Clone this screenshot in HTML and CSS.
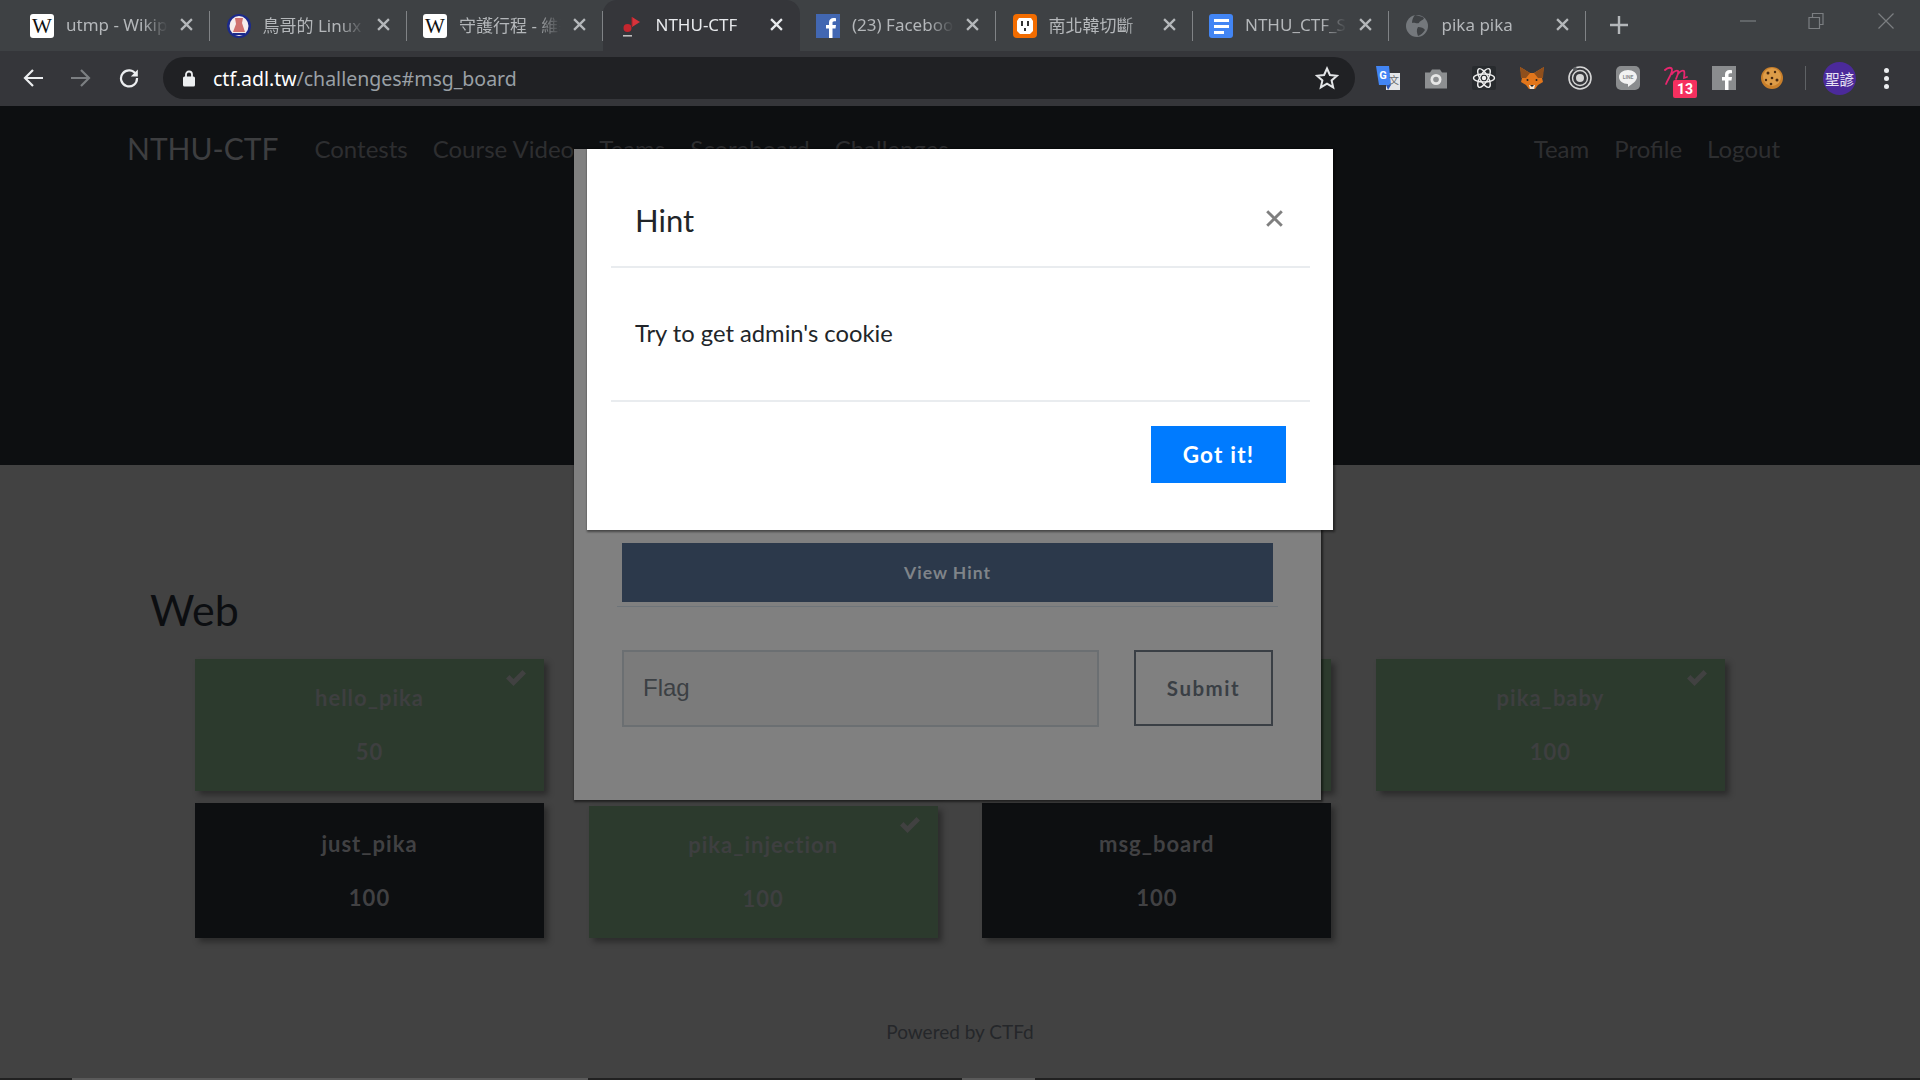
FILE: index.html
```html
<!DOCTYPE html>
<html lang="zh-Hant">
<head>
    <meta charset="UTF-8">
    <link rel="stylesheet" href="styles.css">
    <title>NTHU-CTF</title>
</head>
<body>

    <svg class="sprite" width="0" height="0">
        <symbol id="x" viewBox="0 0 12 12"><path d="M1 1l10 10M11 1L1 11" fill="none" stroke="currentColor" stroke-width="2.1"/></symbol>
        <symbol id="wiki" viewBox="0 0 24 24"><rect width="24" height="24" rx="3" fill="#fff"/><text x="12" y="19" text-anchor="middle" class="wiki-w">W</text></symbol>
        <symbol id="check" viewBox="0 0 22 18"><path d="M1 9.500l3.500-3.500 4 4L17.500 1 21 4.500 8.500 17z" fill="currentColor"/></symbol>
    </svg>

    <!-- tabs -->
    <div class="tabstrip">
        <div class="tab">
            <svg class="favicon"><use href="#wiki"/></svg>
            <span class="tab-title">utmp - Wikipedia</span>
            <svg class="tab-x"><use href="#x"/></svg>
        </div>
        <div class="tab">
            <svg class="favicon" viewBox="0 0 24 24"><ellipse cx="12" cy="12" rx="12" ry="12" fill="#1c2a8a"/><ellipse cx="12" cy="12" rx="9.500" ry="10" fill="#f6ecec"/><path d="M8 4h8l-1 5 3 9H6l3-8z" fill="#d0716f"/><path d="M6 19h12v2H6z" fill="#1c2a8a"/></svg>
            <span class="tab-title">鳥哥的 Linux 私房菜</span>
            <svg class="tab-x"><use href="#x"/></svg>
        </div>
        <div class="tab">
            <svg class="favicon"><use href="#wiki"/></svg>
            <span class="tab-title">守護行程 - 維基百科</span>
            <svg class="tab-x"><use href="#x"/></svg>
        </div>
        <div class="tab tab-active">
            <svg class="favicon" viewBox="0 0 24 24"><circle cx="7.500" cy="14" r="4" fill="#c4262e"/><path d="M12 3l8 5-8 5z" fill="#d8333b"/><path d="M11.500 3h1v9h-1z" fill="#a81e26"/><path d="M3 21h9v1.600H3z" fill="#bdbdbd"/></svg>
            <span class="tab-title">NTHU-CTF</span>
            <svg class="tab-x"><use href="#x"/></svg>
        </div>
        <div class="tab">
            <svg class="favicon" viewBox="0 0 24 24"><rect width="24" height="24" fill="#4267b2"/><path d="M16.500 24v-9.500h3l.5-3.500h-3.500V9c0-1 .4-1.700 1.800-1.700H20V4.200C19.600 4.100 18.600 4 17.500 4 15 4 13 5.600 13 8.500V11h-3v3.500h3V24z" fill="#fff"/></svg>
            <span class="tab-title">(23) Facebook</span>
            <svg class="tab-x"><use href="#x"/></svg>
        </div>
        <div class="tab">
            <svg class="favicon" viewBox="0 0 24 24"><rect width="24" height="24" rx="4" fill="#f26c00"/><path d="M6 4h12l2 3v10l-3 3H7l-3-3V7z" fill="#fff"/><rect x="8" y="7" width="2" height="5" fill="#333"/><rect x="14" y="7" width="2" height="5" fill="#333"/><rect x="11" y="14" width="2" height="3" fill="#333"/></svg>
            <span class="tab-title">南北韓切斷</span>
            <svg class="tab-x"><use href="#x"/></svg>
        </div>
        <div class="tab">
            <svg class="favicon" viewBox="0 0 24 24"><rect width="24" height="24" rx="3" fill="#4285f4"/><path d="M5 5h15v3H5zM5 11h15v3H5zM5 17h10v3H5z" fill="#fff"/></svg>
            <span class="tab-title">NTHU_CTF_Speedrun</span>
            <svg class="tab-x"><use href="#x"/></svg>
        </div>
        <div class="tab">
            <svg class="favicon" viewBox="0 0 24 24"><circle cx="11" cy="12" r="11" fill="#74787c"/><path d="M9 1c3 1 7 1 9 3-1 3-4 2-5 5-3 1-4-1-7 0 0-3 1-6 3-8zM12 13c3 0 6 1 7 3-2 3-4 5-7 6-1-3-2-6 0-9z" fill="#3e4144"/></svg>
            <span class="tab-title">pika pika</span>
            <svg class="tab-x"><use href="#x"/></svg>
        </div>
        <svg class="new-tab" viewBox="0 0 18 18"><path d="M9 0v18M0 9h18" stroke="#b4b7ba" stroke-width="2.400"/></svg>
        <div class="window-btns">
            <svg width="16" height="16" viewBox="0 0 16 16"><path d="M0 8h16" stroke="#7b7e81" stroke-width="1.200"/></svg>
            <svg width="16" height="18" viewBox="0 0 16 18"><path d="M1 5.500h10.500v11H1zM4.500 5.500V1.500H15v11h-3.500" fill="none" stroke="#7b7e81" stroke-width="1.200"/></svg>
            <svg width="16" height="16" viewBox="0 0 16 16"><path d="M.5.500l15 15M15.500.500l-15 15" stroke="#7b7e81" stroke-width="1.200"/></svg>
        </div>
    </div>

    <!-- url bar -->
    <div class="toolbar">
        <svg class="nav-icon" viewBox="0 0 20 20"><path d="M20 10H2M10 2l-8 8 8 8" fill="none" stroke="#eceef0" stroke-width="2.200"/></svg>
        <svg class="nav-icon" viewBox="0 0 20 20"><path d="M0 10h18M10 2l8 8-8 8" fill="none" stroke="#7c7f82" stroke-width="2.200"/></svg>
        <svg class="nav-icon" viewBox="0 0 20 20"><path d="M17 6.500A8 8 0 1 0 18 10" fill="none" stroke="#eceef0" stroke-width="2.200"/><path d="M18.800 1.500v7h-7z" fill="#eceef0"/></svg>
        <div class="omnibox">
            <svg class="lock" viewBox="0 0 12 17"><path d="M3 7V4.500a3 3 0 0 1 6 0V7" fill="none" stroke="#eceef0" stroke-width="1.800"/><rect y="6.500" width="12" height="10" rx="1.500" fill="#eceef0"/></svg>
            <span class="url"><span class="url-host">ctf.adl.tw</span>/challenges#msg_board</span>
            <svg class="star" viewBox="0 0 24 24"><path d="M12 2.500l2.900 6.500 7.100.700-5.400 4.700 1.600 7-6.200-3.700-6.200 3.700 1.600-7L2 9.700l7.100-.700z" fill="none" stroke="#e3e5e7" stroke-width="2"/></svg>
        </div>
        <div class="extensions">
            <svg class="ext" viewBox="0 0 24 24"><path d="M10 7h14v17H10z" fill="#e4e6e8"/><path d="M0 0h13l2 19H3z" fill="#4285f4"/><path d="M10 19h5l-3 5z" fill="#2a56b8"/><text x="7" y="12.500" text-anchor="middle" class="ext-g">G</text><text x="18" y="18" text-anchor="middle" class="ext-wen">文</text></svg>
            <svg class="ext" viewBox="0 0 24 24"><path d="M1 6.500h5l2-3h8l2 3h5v16H1z" fill="#8d8f91"/><circle cx="12" cy="13.500" r="5.500" fill="#e6e6e6"/><circle cx="12" cy="13.500" r="2.800" fill="#8d8f91"/></svg>
            <svg class="ext" viewBox="0 0 24 24"><rect width="24" height="24" rx="2" fill="#282b2e"/><g fill="none" stroke="#f0f0f0" stroke-width="1.400"><ellipse cx="12" cy="12" rx="10.500" ry="4"/><ellipse cx="12" cy="12" rx="10.500" ry="4" transform="rotate(60 12 12)"/><ellipse cx="12" cy="12" rx="10.500" ry="4" transform="rotate(120 12 12)"/></g><circle cx="12" cy="12" r="2.200" fill="#f0f0f0"/></svg>
            <svg class="ext" viewBox="0 0 24 24"><path d="M0 1l10 6h4l10-6-2 11 1 4-5 3-3 4h-6l-3-4-5-3 1-4z" fill="#e2761b"/><path d="M0 1l10 6-4 5-5 0zM24 1l-10 6 4 5 5 0z" fill="#8f4f1c"/><path d="M9 19h6l-1 4h-4z" fill="#f0e4d4"/><path d="M10 19h4l-2 2z" fill="#222"/><circle cx="7.500" cy="14" r="1" fill="#222"/><circle cx="16.500" cy="14" r="1" fill="#222"/></svg>
            <svg class="ext" viewBox="0 0 24 24"><g fill="none" stroke="#d6d6d6"><circle cx="12" cy="12" r="11" stroke-width="1.600"/><circle cx="12" cy="12" r="7.500" stroke-width="1.400"/></g><circle cx="12" cy="12" r="4" fill="#d6d6d6"/><circle cx="7" cy="3" r="2" fill="#55585b"/></svg>
            <svg class="ext" viewBox="0 0 24 24"><rect width="24" height="24" rx="5" fill="#8a8c8e"/><path d="M12 4c5 0 9 3 9 7 0 4-5 7-9 10v-3c-5 0-9-3-9-7s4-7 9-7z" fill="#f2f2f2"/><text x="12" y="13" text-anchor="middle" class="ext-line">LINE</text></svg>
            <div class="ext-badged">
                <svg class="ext" viewBox="0 0 24 24"><path d="M1 4c3-3 7-3 7 0 0 4-4 9-6 14M8 8c2-3 5-4 6-3 1 2-1 5-2 8M14 8c2-3 5-4 6-3 1 2 0 5 0 7l3-1" fill="none" stroke="#e8266e" stroke-width="1.800" stroke-linecap="round"/></svg>
                <span class="badge">13</span>
            </div>
            <svg class="ext" viewBox="0 0 24 24"><rect width="24" height="24" fill="#8a8c8e"/><path d="M16.500 24v-9.500h3l.5-3.500h-3.500V9c0-1 .4-1.700 1.800-1.700H20V4.200C19.600 4.100 18.600 4 17.500 4 15 4 13 5.600 13 8.500V11h-3v3.500h3V24z" fill="#fff"/></svg>
            <svg class="ext" viewBox="0 0 24 24"><circle cx="12" cy="12" r="11" fill="#c97f2a"/><circle cx="12" cy="11" r="9" fill="#dd9c48"/><g fill="#4a2a10"><circle cx="8" cy="7" r="1.500"/><circle cx="15" cy="6" r="1.200"/><circle cx="12" cy="12" r="1.300"/><circle cx="6" cy="14" r="1.200"/><circle cx="17" cy="14" r="1.500"/><circle cx="11" cy="18" r="1.300"/></g></svg>
        </div>
        <span class="toolbar-sep"></span>
        <span class="avatar">聖諺</span>
        <span class="dots"><i></i><i></i><i></i></span>
    </div>

    <!-- page -->
    <div class="page">
        <div class="jumbo">
            <nav class="navbar">
                <a class="brand">NTHU-CTF</a>
                <a>Contests</a>
                <a>Course Video</a>
                <a>Teams</a>
                <a>Scoreboard</a>
                <a>Challenges</a>
                <span class="nav-space"></span>
                <a>Team</a>
                <a>Profile</a>
                <a>Logout</a>
            </nav>
        </div>

        <div class="challenges">
            <h3 class="category">Web</h3>
            <div class="board">
                <div class="card solved">
                    <svg class="tick"><use href="#check"/></svg>
                    <p class="card-name">hello_pika</p>
                    <p class="card-value">50</p>
                </div>
                <div class="card solved"></div>
                <div class="card solved"></div>
                <div class="card solved">
                    <svg class="tick"><use href="#check"/></svg>
                    <p class="card-name">pika_baby</p>
                    <p class="card-value">100</p>
                </div>
                <div class="card">
                    <p class="card-name">just_pika</p>
                    <p class="card-value">100</p>
                </div>
                <div class="card solved">
                    <svg class="tick"><use href="#check"/></svg>
                    <p class="card-name">pika_injection</p>
                    <p class="card-value">100</p>
                </div>
                <div class="card">
                    <p class="card-name">msg_board</p>
                    <p class="card-value">100</p>
                </div>
            </div>
        </div>

        <p class="powered">Powered by CTFd</p>

        <!-- challenge window behind the hint -->
        <div class="challenge-window">
            <div class="hint-row">
                <button class="view-hint">View Hint</button>
            </div>
            <div class="flag-row">
                <input class="flag-input" placeholder="Flag">
                <button class="submit">Submit</button>
            </div>
        </div>

        <!-- hint -->
        <div class="hint-window">
            <div class="hint-head">
                <span class="hint-title">Hint</span>
                <svg class="hint-close" viewBox="0 0 14 14"><path d="M1 1l12 12M13 1L1 13" stroke="#7f7f7f" stroke-width="2.400"/></svg>
            </div>
            <div class="hint-body">Try to get admin's cookie</div>
            <div class="hint-foot">
                <button class="got-it">Got it!</button>
            </div>
        </div>
    </div>

    <div class="scrollbar">
        <span class="thumb thumb-a"></span>
        <span class="thumb thumb-b"></span>
    </div>

</body>
</html>
```

FILE: styles.css
```css
* {
    box-sizing: border-box;
}
body {
    margin: 0;
    height: 1080px;
    overflow: hidden;
    display: flex;
    flex-direction: column;
    background-color: #424242;
    font-family: 'Lato', sans-serif;
}
p {
    margin: 0;
}
.sprite {
    position: absolute;
}

/* tabs */
.tabstrip {
    height: 51px;
    flex: none;
    display: flex;
    align-items: center;
    padding-left: 13.5px;
    background-color: #3e4144;
}
.tab {
    width: 196.5px;
    height: 51px;
    flex: none;
    display: flex;
    align-items: center;
    padding-left: 16.5px;
    position: relative;
    font-family: 'Noto Sans', 'Noto Sans CJK TC', sans-serif;
    font-size: 17px;
    color: #b4b7ba;
}
.tab::after {
    content: '';
    position: absolute;
    right: 0;
    top: 11px;
    height: 30px;
    width: 1px;
    background-color: #808386;
}
.tab-active {
    background-color: #35363a;
    border-radius: 14px 14px 0 0;
    color: #e8eaed;
}
.tab-active::after {
    display: none;
}
.favicon {
    width: 24px;
    height: 24px;
    flex: none;
}
.wiki-w {
    font-family: 'Liberation Serif', serif;
    font-size: 21px;
    fill: #111;
}
.tab-title {
    width: 102px;
    margin-left: 12px;
    margin-top: -3px;
    white-space: nowrap;
    overflow: hidden;
    -webkit-mask-image: linear-gradient(to right, #000 75%, transparent);
    mask-image: linear-gradient(to right, #000 75%, transparent);
}
.tab-x {
    width: 13px;
    height: 13px;
    margin-left: 12px;
    margin-top: -2px;
    flex: none;
}
.new-tab {
    width: 18px;
    height: 18px;
    margin-left: 24px;
    margin-top: -2px;
}
.window-btns {
    margin-left: auto;
    margin-right: 26px;
    margin-top: -10px;
    display: flex;
    align-items: center;
    gap: 52px;
}
.window-btns svg:last-child {
    margin-left: 2px;
}

/* url bar */
.toolbar {
    height: 55px;
    flex: none;
    display: flex;
    align-items: center;
    padding-left: 23px;
    padding-bottom: 1px;
    background-color: #35363a;
    position: relative;
}
.nav-icon {
    width: 20px;
    height: 20px;
    margin-right: 28px;
    flex: none;
}
.omnibox {
    width: 1192px;
    height: 42px;
    margin-left: -4px;
    flex: none;
    display: flex;
    align-items: center;
    padding-left: 20px;
    padding-right: 16px;
    border-radius: 21px;
    background-color: #202124;
}
.lock {
    width: 12px;
    height: 17px;
    flex: none;
}
.url {
    margin-left: 18px;
    font-family: 'Noto Sans', sans-serif;
    font-size: 19.500px;
    color: #9aa0a6;
}
.url-host {
    color: #fff;
}
.star {
    width: 24px;
    height: 24px;
    margin-left: auto;
}
.extensions {
    margin-left: 21px;
    display: flex;
    align-items: center;
    gap: 24px;
}
.ext {
    width: 24px;
    height: 24px;
    display: block;
}
.ext-g {
    font-family: 'Roboto', sans-serif;
    font-size: 11px;
    font-weight: 700;
    fill: #fff;
}
.ext-wen {
    font-family: 'Noto Sans CJK TC', sans-serif;
    font-size: 10px;
    fill: #6a6d70;
}
.ext-line {
    font-family: 'Roboto', sans-serif;
    font-size: 5px;
    font-weight: 700;
    fill: #8a8c8e;
}
.ext-badged {
    position: relative;
}
.badge {
    position: absolute;
    left: 9px;
    top: 14px;
    width: 24px;
    height: 18px;
    border-radius: 2px;
    background-color: #f5305f;
    color: #fff;
    font-family: 'Roboto', sans-serif;
    font-size: 14px;
    font-weight: 700;
    line-height: 19px;
    text-align: center;
}
.toolbar-sep {
    width: 1px;
    height: 24px;
    margin-left: 21px;
    background-color: #5f6265;
}
.avatar {
    width: 33px;
    height: 33px;
    margin-left: 17px;
    border-radius: 50%;
    background-color: #4b2a9a;
    color: #e8e4f4;
    font-family: 'Noto Sans CJK TC', sans-serif;
    font-size: 14.500px;
    line-height: 33px;
    text-align: center;
}
.dots {
    margin-left: 28px;
    display: flex;
    flex-direction: column;
    gap: 3px;
}
.dots i {
    width: 5px;
    height: 5px;
    border-radius: 50%;
    background-color: #eceef0;
}

/* page */
.page {
    flex: 1;
    position: relative;
    overflow: hidden;
}
.jumbo {
    height: 359px;
    background-color: #0d0f11;
}
.navbar {
    display: flex;
    align-items: center;
    gap: 25px;
    padding: 24px 140px 0 127px;
    font-size: 24px;
    color: #2d2e30;
}
.brand {
    margin-right: 11px;
    font-size: 30px;
    color: #3d3e40;
}
.nav-space {
    flex: 1;
}
.challenges {
    padding: 118.5px 0 0 150px;
}
.category {
    margin: 0;
    font-size: 43px;
    font-weight: 400;
    line-height: 52px;
    color: #0c0e11;
}
.board {
    width: 1530px;
    margin: 23.5px 0 0 45px;
    display: grid;
    grid-template-columns: repeat(4, 349px);
    grid-template-rows: 132px 135px;
    justify-content: space-between;
    row-gap: 12px;
    align-items: end;
}
.card {
    height: 135px;
    position: relative;
    padding-top: 28px;
    background-color: #0d0f11;
    box-shadow: 4px 4px 6px rgba(0, 0, 0, 0.35);
    color: #414143;
    font-size: 22px;
    font-weight: 700;
    letter-spacing: 1px;
    text-align: center;
}
.solved {
    height: 132px;
    padding-top: 26px;
    background-color: #2c3a2d;
    color: #3e3f40;
}
.card-name {
    line-height: 26px;
}
.card-value {
    margin-top: 28px;
    line-height: 26px;
}
.tick {
    position: absolute;
    right: 17px;
    top: 10px;
    width: 22px;
    height: 18px;
    color: #414141;
}
.powered {
    margin-top: 82px;
    text-align: center;
    font-size: 19px;
    color: #25272a;
}

/* challenge window */
.challenge-window {
    position: absolute;
    left: 574px;
    top: 43px;
    width: 747px;
    height: 651px;
    padding: 394px 43px 0;
    background-color: #808080;
    box-shadow: 1px 1px 2px 1px rgba(0, 0, 0, 0.5);
}
.hint-row {
    padding: 0 5px 4px;
    border-bottom: 1px solid #6e7479;
}
.view-hint {
    width: 100%;
    height: 59px;
    border: none;
    display: block;
    background-color: #2c394b;
    color: #7f8489;
    font-family: inherit;
    font-size: 17.500px;
    font-weight: 700;
    letter-spacing: 1px;
}
.flag-row {
    margin-top: 43px;
    padding: 0 5px;
    display: flex;
    justify-content: space-between;
    align-items: flex-start;
}
.flag-input {
    width: 477px;
    height: 77px;
    padding: 0 19px 2px;
    border: 2px solid #6b6f72;
    background-color: #7b7b7b;
    font-family: 'Liberation Sans', sans-serif;
    font-size: 24px;
}
.flag-input::placeholder {
    color: #3c4044;
    opacity: 1;
}
.submit {
    width: 139px;
    height: 76px;
    border: 2px solid #3a3f45;
    background: none;
    color: #3a3f45;
    font-family: inherit;
    font-size: 20.500px;
    font-weight: 700;
    letter-spacing: 1.500px;
}

/* hint */
.hint-window {
    position: absolute;
    left: 587px;
    top: 43px;
    width: 746px;
    height: 381px;
    padding: 0 23px 0 24px;
    background-color: #fff;
    box-shadow: 1px 1px 2px 1px rgba(0, 0, 0, 0.45);
    color: #212529;
}
.hint-head {
    height: 119px;
    display: flex;
    justify-content: space-between;
    padding: 52px 27px 0 24px;
    border-bottom: 2px solid #e9ecef;
}
.hint-title {
    font-size: 31px;
    line-height: 38px;
}
.hint-close {
    width: 17px;
    height: 17px;
    margin-top: 9px;
}
.hint-body {
    height: 134px;
    padding: 51px 24px 0;
    border-bottom: 2px solid #e9ecef;
    font-size: 23.750px;
    line-height: 28px;
}
.hint-foot {
    padding: 24px 24px 0 0;
    display: flex;
    justify-content: flex-end;
}
.got-it {
    width: 135px;
    height: 57px;
    border: none;
    background-color: #007bff;
    color: #fff;
    font-family: inherit;
    font-size: 22.500px;
    font-weight: 700;
    letter-spacing: 1.200px;
}

.scrollbar {
    height: 2px;
    flex: none;
    position: relative;
    background-color: #212121;
}
.thumb {
    position: absolute;
    top: 0;
    height: 2px;
    background-color: #5a5a5a;
}
.thumb-a {
    left: 72px;
    width: 516px;
}
.thumb-b {
    left: 962px;
    width: 73px;
}
```
